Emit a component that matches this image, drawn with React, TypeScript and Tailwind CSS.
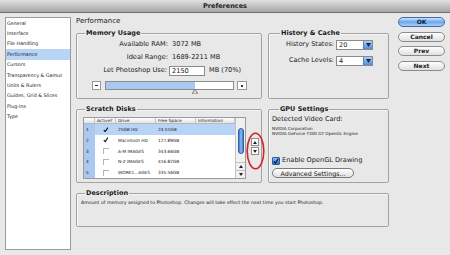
import React from "react";

const Check = ({ color = "#111", size = 6 }: { color?: string; size?: number }) => (
  <svg width={size} height={size} viewBox="0 0 10 10">
    <path d="M1.5 5.5 L4 8.5 L9 1" fill="none" stroke={color} strokeWidth="2" />
  </svg>
);

function PillButton({ children, blue, w }: { children: React.ReactNode; blue?: boolean; w: string }) {
  return (
    <div
      className={
        "h-[10px] rounded-full flex items-center justify-center text-[6px] leading-[6px] font-bold border " +
        w +
        " " +
        (blue
          ? "border-[#3e6bab] bg-gradient-to-b from-[#cfe4fb] via-[#6aa6ea] to-[#a7d0f8] text-[#0d1d33]"
          : "border-[#8c8c8c] bg-gradient-to-b from-[#ffffff] to-[#e0e0e0] text-[#222]")
      }
    >
      {children}
    </div>
  );
}

function Select({ value }: { value: string }) {
  return (
    <div className="ml-[2px] w-[37px] h-[10px] bg-white border border-[#8a8a8a] flex items-center">
      <span className="flex-1 pl-[2px] text-[6.5px] leading-[8px]">{value}</span>
      <div className="w-[9px] h-full bg-gradient-to-b from-[#a9cdf6] to-[#4d8de0] border-l border-[#5b7fb0] flex items-center justify-center">
        <svg width="5" height="4" viewBox="0 0 5 4">
          <path d="M0 0 L5 0 L2.5 4 Z" fill="#14284a" />
        </svg>
      </div>
    </div>
  );
}

const sideItems = [
  "General",
  "Interface",
  "File Handling",
  "Performance",
  "Cursors",
  "Transparency & Gamut",
  "Units & Rulers",
  "Guides, Grid & Slices",
  "Plug-Ins",
  "Type",
];

const rows = [
  { n: "1", on: true, drive: "25GB HD", free: "24.51GB" },
  { n: "2", on: true, drive: "Macintosh HD", free: "127.89GB" },
  { n: "3", on: false, drive: "A-M IMAGES", free: "343.66GB" },
  { n: "4", on: false, drive: "N-Z IMAGES", free: "416.82GB" },
  { n: "5", on: false, drive: "WORK1...AGES", free: "335.56GB" },
];

export default function App() {
  return (
    <div className="w-[450px] h-[255px] bg-[#e8e8e8] overflow-hidden text-[#1a1a1a] [font-family:'DejaVu_Sans',sans-serif]">
      {/* title bar */}
      <div className="h-[13px] bg-gradient-to-b from-[#e0e0e0] to-[#a6a6a6] border-b border-[#6d6d6d] flex items-center justify-center text-[6.5px] leading-[7px] font-bold text-[#222]">
        Preferences
      </div>

      <div className="flex pl-[5px] pt-[4px]">
        {/* sidebar */}
        <div className="w-[66px] h-[233px] bg-white border border-[#9a9a9a] flex flex-col">
          {sideItems.map((s) => (
            <div
              key={s}
              className={
                "h-[10.4px] pl-[1px] flex items-center text-[4.8px] leading-[5px] whitespace-nowrap " +
                (s === "Performance" ? "bg-[#b9d5f6]" : "")
              }
            >
              {s}
            </div>
          ))}
        </div>

        {/* main */}
        <div className="ml-[5px] w-[313px] flex flex-col">
          <div className="h-[9px] leading-[9px] text-[7px]">Performance</div>

          <div className="mt-[3px] flex">
            {/* Memory usage */}
            <fieldset className="w-[186px] h-[70px] border border-[#a3a3a3] rounded-[2px] shadow-[inset_1px_1px_0_#f6f6f6]">
              <legend className="ml-[8px] px-[1px] text-[6.5px] leading-[8px] font-bold">Memory Usage</legend>
              <div className="pt-[1px] flex flex-col text-[6.6px]">
                <div className="h-[13px] flex items-center">
                  <span className="w-[91px] text-right">Available RAM:</span>
                  <span className="ml-[4px]">3072 MB</span>
                </div>
                <div className="h-[13px] flex items-center">
                  <span className="w-[91px] text-right">Ideal Range:</span>
                  <span className="ml-[4px]">1689-2211 MB</span>
                </div>
                <div className="h-[14px] flex items-center">
                  <span className="w-[90px] text-right">Let Photoshop Use:</span>
                  <div className="ml-[2px] w-[36px] h-[10px] bg-white border border-[#8a8a8a] pl-[2px] flex items-center leading-[8px]">
                    2150
                  </div>
                  <span className="ml-[4px]">MB (70%)</span>
                </div>
                <div className="mt-[3px] h-[9px] pl-[15px] flex items-center">
                  <div className="w-[9px] h-[9px] bg-white border border-[#9a9a9a] flex items-center justify-center">
                    <div className="w-[3px] h-[1px] bg-[#333]" />
                  </div>
                  <div className="ml-[4px] w-[129px] h-[9px] bg-white border border-[#8c8c8c] relative">
                    <div className="w-[89px] h-full bg-[#a9c9f1]" />
                    <svg className="absolute left-[86px] top-[7px]" width="6" height="5" viewBox="0 0 6 5">
                      <path d="M3 0 L6 5 L0 5 Z" fill="#dcdcdc" stroke="#666" strokeWidth="0.8" />
                    </svg>
                  </div>
                  <div className="ml-[3px] w-[10px] h-[9px] bg-white border border-[#9a9a9a] flex items-center justify-center">
                    <div className="w-[2px] h-[2px] bg-[#333]" />
                  </div>
                </div>
              </div>
            </fieldset>

            {/* History & cache */}
            <fieldset className="ml-[6px] w-[121px] h-[70px] border border-[#a3a3a3] rounded-[2px] shadow-[inset_1px_1px_0_#f6f6f6]">
              <legend className="ml-[11px] px-[1px] text-[6.5px] leading-[8px] font-bold">History &amp; Cache</legend>
              <div className="pt-[3px] flex flex-col gap-[6px] text-[6.5px]">
                <div className="h-[10px] flex items-center">
                  <span className="w-[65px] text-right">History States:</span>
                  <Select value="20" />
                </div>
                <div className="h-[10px] flex items-center">
                  <span className="w-[65px] text-right">Cache Levels:</span>
                  <Select value="4" />
                </div>
              </div>
            </fieldset>
          </div>

          <div className="mt-[6px] flex">
            {/* Scratch disks */}
            <fieldset className="relative w-[186px] h-[78px] border border-[#a3a3a3] rounded-[2px] shadow-[inset_1px_1px_0_#f6f6f6]">
              <legend className="ml-[8px] px-[1px] text-[6.5px] leading-[8px] font-bold">Scratch Disks</legend>
              <div className="mt-[4px] ml-[6px] flex items-start">
                <div className="w-[163px] h-[62px] bg-white border border-[#9a9a9a] flex overflow-hidden">
                  <div className="w-[151px] flex flex-col text-[4.3px] leading-[5px]">
                    <div className="h-[9px] flex bg-gradient-to-b from-white to-[#e4e4e4] border-b border-[#b8b8b8]">
                      <div className="w-[11px] border-r border-[#c4c4c4]" />
                      <div className="w-[21px] border-r border-[#c4c4c4] pl-[2px] flex items-center">Active?</div>
                      <div className="w-[40px] border-r border-[#c4c4c4] pl-[2px] flex items-center">Drive</div>
                      <div className="w-[40px] border-r border-[#c4c4c4] pl-[2px] flex items-center">Free Space</div>
                      <div className="w-[39px] border-r border-[#c4c4c4] pl-[2px] flex items-center">Information</div>
                    </div>
                    {rows.map((r, i) => (
                      <div key={r.n} className={"h-[10.8px] shrink-0 flex " + (i === 0 ? "bg-[#b7d3f5]" : "")}>
                        <div className="w-[11px] bg-[#abc8ee] pl-[2px] flex items-center">{r.n}</div>
                        <div className="w-[21px] flex items-center justify-center">
                          <div className={"w-[6px] h-[6px] flex items-center justify-center " + (r.on ? "" : "border-l border-t border-[#b5b5b5]")}>
                            {r.on && <Check size={5.5} />}
                          </div>
                        </div>
                        <div className="w-[40px] pl-[2px] flex items-center whitespace-nowrap">{r.drive}</div>
                        <div className="w-[40px] pl-[2px] flex items-center">{r.free}</div>
                        <div className="w-[39px]" />
                      </div>
                    ))}
                  </div>
                  <div className="w-[10px] h-full bg-[#f0f0f0] border-l border-[#c4c4c4] flex flex-col items-center">
                    <div className="mt-[10px] w-[6px] h-[26px] rounded-full bg-gradient-to-r from-[#3d78cf] via-[#8fbdf2] to-[#3d78cf] border border-[#2f5e9f]" />
                    <div className="flex-1" />
                    <div className="w-full h-[8px] border-t border-[#c4c4c4] flex items-center justify-center">
                      <svg width="4" height="3" viewBox="0 0 4 3"><path d="M2 0 L4 3 L0 3 Z" fill="#222" /></svg>
                    </div>
                    <div className="w-full h-[8px] border-t border-[#c4c4c4] flex items-center justify-center">
                      <svg width="4" height="3" viewBox="0 0 4 3"><path d="M0 0 L4 0 L2 3 Z" fill="#222" /></svg>
                    </div>
                  </div>
                </div>
                <div className="ml-[5px] mt-[21px] flex flex-col gap-[1px]">
                  <div className="w-[8px] h-[8px] bg-white border border-[#8e8e8e] flex items-center justify-center">
                    <svg width="4" height="3" viewBox="0 0 4 3"><path d="M2 0 L4 3 L0 3 Z" fill="#222" /></svg>
                  </div>
                  <div className="w-[8px] h-[8px] bg-white border border-[#8e8e8e] flex items-center justify-center">
                    <svg width="4" height="3" viewBox="0 0 4 3"><path d="M0 0 L4 0 L2 3 Z" fill="#222" /></svg>
                  </div>
                </div>
              </div>
              <svg className="absolute left-[169px] top-[19px]" width="19" height="38" viewBox="0 0 19 38">
                <ellipse cx="9.5" cy="19" rx="8.3" ry="17.8" fill="none" stroke="#d3222a" strokeWidth="1.6" />
              </svg>
            </fieldset>

            {/* GPU settings */}
            <fieldset className="ml-[6px] w-[121px] h-[78px] border border-[#a3a3a3] rounded-[2px] shadow-[inset_1px_1px_0_#f6f6f6]">
              <legend className="ml-[10px] px-[1px] text-[6.5px] leading-[8px] font-bold">GPU Settings</legend>
              <div className="pl-[3px] flex flex-col">
                <div className="mt-[2px] h-[10px] flex items-center text-[6.6px]">Detected Video Card:</div>
                <div className="mt-[2px] h-[5px] flex items-center text-[4.2px] whitespace-nowrap">NVIDIA Corporation</div>
                <div className="h-[5px] flex items-center text-[4.2px] whitespace-nowrap">NVIDIA GeForce 7300 GT OpenGL Engine</div>
                <div className="mt-[19px] h-[9px] flex items-center">
                  <div className="w-[8px] h-[8px] rounded-[1px] bg-gradient-to-b from-[#8cbcf3] to-[#2f6fcc] border border-[#2d5a98] flex items-center justify-center">
                    <Check color="#0b1c3a" size={6} />
                  </div>
                  <span className="ml-[2px] text-[6.6px]">Enable OpenGL Drawing</span>
                </div>
                <div className="mt-[3px]">
                  <div className="w-[82px] h-[10px] rounded-full border border-[#7a7a7a] bg-gradient-to-b from-white to-[#dedede] flex items-center justify-center text-[6.3px] leading-[7px]">
                    Advanced Settings...
                  </div>
                </div>
              </div>
            </fieldset>
          </div>

          {/* Description */}
          <fieldset className="mt-[6px] w-[313px] h-[38px] border border-[#a3a3a3] rounded-[2px] shadow-[inset_1px_1px_0_#f6f6f6]">
            <legend className="ml-[8px] px-[1px] text-[6.5px] leading-[8px] font-bold">Description</legend>
            <div className="mt-[3px] pl-[4px] text-[4.7px] leading-[6px] whitespace-nowrap">
              Amount of memory assigned to Photoshop. Changes will take effect the next time you start Photoshop.
            </div>
          </fieldset>
        </div>

        {/* buttons */}
        <div className="ml-[9px] w-[47px] flex flex-col gap-[4.7px]">
          <PillButton blue w="w-[47px]">OK</PillButton>
          <PillButton w="w-[47px]">Cancel</PillButton>
          <PillButton w="w-[47px]">Prev</PillButton>
          <PillButton w="w-[47px]">Next</PillButton>
        </div>
      </div>
    </div>
  );
}
